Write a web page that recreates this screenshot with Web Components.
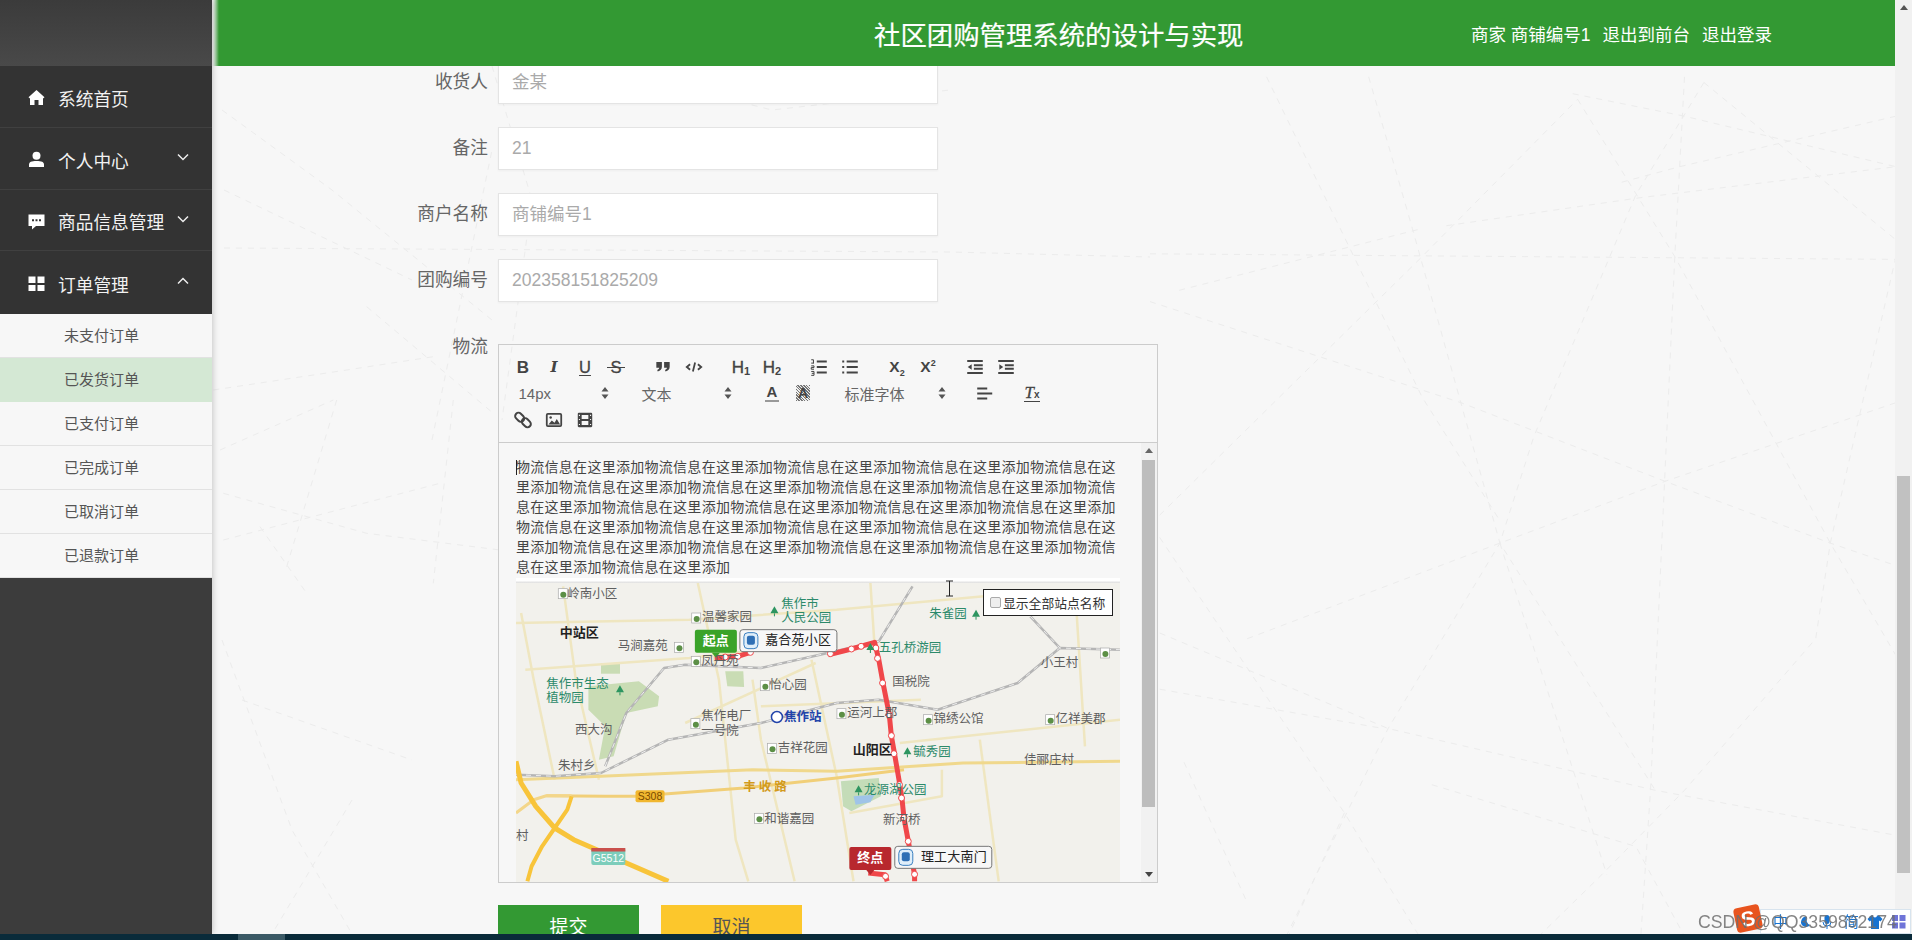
<!DOCTYPE html>
<html lang="zh">
<head>
<meta charset="utf-8">
<title>社区团购管理系统的设计与实现</title>
<style>
  html, body { margin: 0; height: 100%; overflow: hidden; }
  body { display: flex; flex-direction: column; background: #f7f7f7; color: #666;
    font-family: "Liberation Sans", "Noto Sans CJK SC", sans-serif; }
  .page-row { display: flex; height: 934px; overflow: hidden; }
</style>
</head>
<body>
<div class="page-row">
  <side-bar></side-bar>
  <main-pane>
    <order-form>
      <form-row label="收货人"><text-field value="金某"></text-field></form-row>
      <form-row label="备注"><text-field value="21"></text-field></form-row>
      <form-row label="商户名称"><text-field value="商铺编号1"></text-field></form-row>
      <form-row label="团购编号"><text-field value="202358151825209"></text-field></form-row>
      <form-row label="物流" tall><rich-editor></rich-editor></form-row>
      <form-actions></form-actions>
    </order-form>
  </main-pane>
  <page-scroll></page-scroll>
</div>
<task-strip></task-strip>
<ime-bar></ime-bar>

<script>
// small helper, every element is just a template in an open shadow root
function define(name, html) {
  const tpl = document.createElement("template");
  tpl.innerHTML = html;
  customElements.define(name, class extends HTMLElement {
    constructor() {
      super();
      this.attachShadow({ mode: "open" });
      this.shadowRoot.appendChild(tpl.content.cloneNode(true));
    }
  });
}

const chevDown = `<svg class="chev" width="14" height="10" viewBox="0 0 14 10"><path d="M2 2.5l5 5 5-5" fill="none" stroke="#eee" stroke-width="1.5"/></svg>`;
const chevUp = `<svg class="chev" width="14" height="10" viewBox="0 0 14 10"><path d="M2 7.5l5-5 5 5" fill="none" stroke="#eee" stroke-width="1.5"/></svg>`;

define("side-bar", `
  <style>
    :host { display: block; flex: 0 0 212px; width: 212px; background: #3c3c3c; position: relative; z-index: 3;
      box-shadow: 0 0 7px rgba(0,0,0,.25); }
    .logo { height: 66px; background: linear-gradient(#3b3b3b, #494949); }
    .item { box-sizing: border-box; height: 62px; background: #333; border-bottom: 1px solid #404040;
      display: flex; align-items: center; color: #f2f2f2; font-size: 17.700px; padding: 2px 0 0 28px; }
    .item.s { height: 61px; }
    .item.l { height: 63px; border-bottom: 0; }
    .item svg.ic { width: 17px; height: 17px; margin-right: 13px; fill: #fff; flex: none; }
    .item .chev { margin-left: auto; margin-right: 22px; margin-top: -5px; }
    .sub { background: #f7f7f7; }
    .sub div { box-sizing: border-box; height: 44px; line-height: 43px; padding-left: 64px; font-size: 15px; color: #555;
      border-bottom: 1px solid #e2e2e2; }
    .sub div.on { background: #d4e8d4; border-bottom-color: #d4e8d4; }
  </style>
  <div class="logo"></div>
  <div class="item"><svg class="ic" viewBox="0 0 17 17"><path d="M8.5 1L0.5 8.2 2 9.5V16h4.5v-5h4v5H15V9.500l1.500-1.300z"/></svg>系统首页</div>
  <div class="item"><svg class="ic" viewBox="0 0 17 17"><circle cx="8.500" cy="4.800" r="4"/><path d="M1 16v-2.500C1 11 3.500 10 8.500 10s7.500 1 7.500 3.500V16z"/></svg>个人中心${chevDown}</div>
  <div class="item s"><svg class="ic" viewBox="0 0 17 17"><path fill-rule="evenodd" d="M0.500 1.500h16v11.500H8L4 16.500V13H0.500zM4 6.200v2h2v-2zM7.500 6.200v2h2v-2zM11 6.200v2h2v-2z"/></svg>商品信息管理${chevDown}</div>
  <div class="item l"><svg class="ic" viewBox="0 0 17 17"><path d="M.5 1.500h7v6.500h-7zM9.500 1.500h7v6.500h-7zM.5 10h7v6h-7zM9.500 10h7v6h-7z"/></svg>订单管理${chevUp}</div>
  <div class="sub">
    <div>未支付订单</div><div class="on">已发货订单</div><div>已支付订单</div>
    <div>已完成订单</div><div>已取消订单</div><div>已退款订单</div>
  </div>
`);

define("top-bar", `
  <style>
    :host { position: absolute; z-index: 2; top: 0; left: 0; right: 0; height: 66px; box-sizing: border-box;
      display: flex; align-items: center; justify-content: space-between; padding: 0 123px 0 662px;
      background: linear-gradient(90deg, #f0f0f0 1px, #b8d8b8 3px, #339933 7px); color: #fff; }
    .title { font-size: 26.400px; -webkit-text-stroke: .2px #fff; }
    .links { font-size: 17.500px; display: flex; gap: 12px; white-space: nowrap; }
  </style>
  <div class="title">社区团购管理系统的设计与实现</div>
  <div class="links"><span>商家 商铺编号1</span><span>退出到前台</span><span>退出登录</span></div>
`);

// faint dashed web behind the content, coordinates come from the picture
define("bg-lines", `
  <style>
    :host { position: absolute; inset: 0; z-index: 0; display: block; pointer-events: none; }
    svg { display: block; }
    path { fill: none; stroke: #ececec; stroke-width: 1; stroke-dasharray: 6 6; }
  </style>
  <svg width="1683" height="934"></svg>
`);

define("main-pane", `
  <style>
    :host { display: block; flex: 1; position: relative; overflow: hidden; background: #f7f7f7; }
    .scroller { position: relative; z-index: 1; }
  </style>
  <bg-lines></bg-lines>
  <top-bar></top-bar>
  <div class="scroller"><slot></slot></div>
`);

define("order-form", `
  <style>
    :host { display: block; padding: 61px 0 0 176px; }
  </style>
  <slot></slot>
`);

define("form-row", `
  <style>
    :host { display: flex; gap: 10px; margin-bottom: 23px; }
    :host([tall]) { margin-top: 42px; margin-bottom: 0; }
    label { flex: 0 0 100px; text-align: right; font-size: 17.700px; line-height: 43px; color: #666; white-space: nowrap; }
    :host([tall]) label { margin-top: -18px; }
  </style>
  <label></label><slot></slot>
`);

define("text-field", `
  <style>
    :host { display: block; box-sizing: border-box; width: 440px; height: 43px; line-height: 41px; background: #fff;
      border: 1px solid #e4e4e4; padding-left: 13px; font-size: 17.500px; color: #aaa;
      box-shadow: 0 1px 2px rgba(0,0,0,.04); }
  </style>
  <span></span>
`);

const bi = (inner, fill) => `<svg width="20" height="20" viewBox="0 0 18 18" fill="${fill ? "#444" : "none"}" stroke="${fill ? "none" : "#444"}" stroke-width="1.800">${inner}</svg>`;
const arrows = `<svg class="ar" width="8" height="12" viewBox="0 0 8 12"><path d="M4 0l3.500 4.500h-7zM4 12L.5 7.500h7z" fill="#555"/></svg>`;

define("rich-editor", `
  <style>
    :host { display: block; box-sizing: border-box; width: 660px; height: 539px; border: 1px solid #ccc; position: relative; }
    .tools { box-sizing: border-box; height: 98px; border-bottom: 1px solid #ccc; padding: 9px 0 0 8.500px; color: #444; }
    .row { display: flex; height: 26px; align-items: center; }
    .row.r3 { height: 27px; }
    .b { width: 31px; height: 26px; display: flex; align-items: center; justify-content: center; flex: none; }
    .g { margin-right: 16px; }
    .t { font-size: 17px; font-weight: 700; line-height: 1; }
    .x { font-size: 15.500px; font-weight: 700; line-height: 1; }
    .x sub, .x sup { font-size: 9px; line-height: 0; font-weight: 700; }
    .h { font-size: 17px; font-weight: 400; -webkit-text-stroke: .35px #444; line-height: 1; }
    .h sub { font-size: 11px; line-height: 0; vertical-align: -2px; font-weight: 700; -webkit-text-stroke: 0; }
    .strike { position: relative; display: inline-block; padding: 0 1px; }
    .strike::after { content: ""; position: absolute; left: -2px; right: -2px; top: 8px; height: 1.500px; background: #444; }
    .pick { flex: none; width: 104px; display: flex; align-items: center; justify-content: space-between; padding: 0 5px 0 9px;
      box-sizing: border-box; font-size: 15px; color: #666; }
    .body { display: flex; height: 439px; overflow: hidden; }
    .content { flex: 1; box-sizing: border-box; padding: 14px 0 0 17px; overflow: hidden; position: relative; }
    .text { width: 603px; font-size: 14px; line-height: 20px; letter-spacing: .28px; color: #444; word-break: break-all; }
    .caret { position: absolute; left: 17px; top: 17px; width: 1px; height: 15px; background: #222; }
    .band { width: 604px; height: 5px; margin-top: 1px; background: linear-gradient(#fff, #fff 50%, #ddd); }
    .bar { flex: 0 0 16px; width: 16px; background: #f1f1f1; position: relative; }
    .bar i { position: absolute; left: 1px; top: 17px; width: 13px; height: 347px; background: #bdbdbd; }
    .bar svg { position: absolute; left: 3px; }
    .beam { position: absolute; left: 446px; top: 235px; }
  </style>
  <div class="tools">
    <div class="row">
      <div class="b"><span class="t">B</span></div>
      <div class="b"><span class="t" style="font-family:'DejaVu Serif',serif;font-style:italic;font-size:15px">I</span></div>
      <div class="b"><span class="t" style="font-weight:400;font-size:16.500px;text-decoration:underline;text-underline-offset:2px;-webkit-text-stroke:.3px #444">U</span></div>
      <div class="b g"><span class="t strike" style="font-weight:400;font-size:16.500px;-webkit-text-stroke:.3px #444">S</span></div>
      <div class="b">${bi(`<path d="M3 4.500h5v4.300c0 2.400-1.300 3.700-3.700 4.200l-.5-1.300c1.100-.4 1.700-1 1.800-2H3zM10 4.500h5v4.300c0 2.400-1.300 3.700-3.700 4.200l-.5-1.300c1.100-.4 1.700-1 1.800-2H10z"/>`, true)}</div>
      <div class="b g">${bi(`<path d="M5.500 6.500L2.500 9l3 2.500M12.500 6.500l3 2.500-3 2.500M10 5l-2 8" stroke-width="1.600"/>`)}</div>
      <div class="b"><span class="h">H<sub>1</sub></span></div>
      <div class="b g"><span class="h">H<sub>2</sub></span></div>
      <div class="b">${bi(`<path d="M7 4h9M7 9h9M7 14h9"/><path d="M2 2.500h2v3M2 5.500h2.500M2 8h2.500v1.500H2V11h2.500M2 13h2.500v3.500H2M2.500 14.700h2" stroke-width=".9"/>`)}</div>
      <div class="b g">${bi(`<path d="M6 4h10M6 9h10M6 14h10M2 4h1.800M2 9h1.800M2 14h1.800"/>`)}</div>
      <div class="b"><span class="x">X<sub>2</sub></span></div>
      <div class="b g"><span class="x">X<sup>2</sup></span></div>
      <div class="b">${bi(`<path d="M2 3.500h14M8 7.500h8M8 10.500h8M2 14.500h14"/><path d="M6 6.500v5L2.500 9z" fill="#444" stroke="none"/>`)}</div>
      <div class="b">${bi(`<path d="M2 3.500h14M8 7.500h8M8 10.500h8M2 14.500h14"/><path d="M3 6.500v5L6.500 9z" fill="#444" stroke="none"/>`)}</div>
    </div>
    <div class="row">
      <div class="pick" style="margin-left:2px;margin-right:19px">14px${arrows}</div>
      <div class="pick" style="margin-right:20px">文本${arrows}</div>
      <div class="b"><span class="t" style="font-size:15px;border-bottom:2px solid #999;padding:0 2px 1px">A</span></div>
      <div class="b g"><span class="t" style="font-size:14px;padding:1px 2px;background:repeating-linear-gradient(45deg,#777 0 1px,#eee 1px 2px)">A</span></div>
      <div class="pick" style="width:116px;margin-right:19px;padding-right:5px;padding-left:10px">标准字体${arrows}</div>
      <div class="b g">${bi(`<path d="M2 5h9M2 9.500h13.500M2 14h9"/>`)}</div>
      <div class="b"><span class="t" style="font-family:'Liberation Serif',serif;font-style:italic;font-weight:400;font-size:17px;border-bottom:1.500px solid #444;-webkit-text-stroke:.3px #444">T<span style="font:700 10px 'Liberation Sans',sans-serif;-webkit-text-stroke:0">x</span></span></div>
    </div>
    <div class="row r3">
      <div class="b">${bi(`<rect x="1.500" y="3.500" width="9" height="6" rx="3" transform="rotate(45 6 6.500)"/><rect x="7.500" y="8.500" width="9" height="6" rx="3" transform="rotate(45 12 11.500)"/>`)}</div>
      <div class="b">${bi(`<rect x="2.500" y="3.500" width="13" height="11" rx="1" stroke-width="1.600"/><path d="M4 13l3-3.500 2.500 2 2-3.500L14.500 13z" fill="#444" stroke="none"/><circle cx="6" cy="6.800" r="1.100" fill="#444" stroke="none"/>`)}</div>
      <div class="b">${bi(`<rect x="2.500" y="2.500" width="13" height="13" rx="1" fill="#444" stroke="none"/><path d="M6 4.500h6v3.500H6zM6 10h6v3.500H6z" fill="#f6f6f6" stroke="none"/><path d="M3.500 8.500h1M3.500 4.800h1M3.500 13h1M13.500 8.500h1M13.500 4.800h1M13.500 13h1" stroke="#f6f6f6" stroke-width="1"/>`)}</div>
    </div>
  </div>
  <div class="body">
    <div class="content">
      <div class="text"></div>
      <div class="caret"></div>
      <div class="band"></div>
      <route-map></route-map>
    </div>
    <div class="bar">
      <svg style="top:5px" width="10" height="6" viewBox="0 0 10 6"><path d="M5 0l4 5H1z" fill="#666"/></svg>
      <i></i>
      <svg style="bottom:5px" width="10" height="6" viewBox="0 0 10 6"><path d="M5 6L1 1h8z" fill="#444"/></svg>
    </div>
  </div>
  <svg class="beam" width="9" height="17" viewBox="0 0 9 17"><path d="M1 1h7M4.500 1v15M1 16h7" stroke="#222" fill="none" stroke-width="1"/></svg>
`);

define("route-map", `
  <style>
    :host { display: block; position: relative; width: 604px; height: 300px; background: #f2f1ec; overflow: hidden; }
    svg { position: absolute; left: 0; top: 0; }
    span { position: absolute; white-space: nowrap; font-size: 12.500px; line-height: 14px; color: #5f5f5f; transform: translateY(-7px); }
    span.k { color: #222; font-weight: 700; font-size: 13px; }
    span.g { color: #2c8a6a; }
    span.b { color: #2244aa; font-weight: 700; }
    span.o { color: #d29a1c; font-weight: 700; letter-spacing: 3px; }
    span.m { color: #fff; font-weight: 700; font-size: 13px; }
    span.d { color: #222; font-size: 13px; letter-spacing: .2px; }
    .tag { position: absolute; font-size: 10.500px; line-height: 1; padding: 0; text-align: center; }
    .pick { position: absolute; left: 467px; top: 6px; box-sizing: border-box; width: 130px; height: 27px; background: #fff; border: 1px solid #222;
      display: flex; align-items: center; gap: 2px; padding-left: 6px; font-size: 12.800px; color: #333; white-space: nowrap; }
    .pick i { width: 11px; height: 11px; box-sizing: border-box; border: 1px solid #aaa; background: #eee; border-radius: 2px; flex: none; }
  </style>
  <svg width="604" height="300"></svg>
  <div class="labels"></div>
  <div class="pick"><i></i>显示全部站点名称</div>
`);

define("form-actions", `
  <style>
    :host { display: flex; gap: 22px; margin: 22px 0 0 110px; }
    button { width: 141px; height: 50px; border: 0; font: inherit; font-size: 19px; line-height: 44px; padding: 0 0 4px; }
    .ok { background: #339933; color: #fff; }
    .no { background: #fcc72c; color: #555; }
  </style>
  <button class="ok">提交</button><button class="no">取消</button>
`);

define("page-scroll", `
  <style>
    :host { display: block; flex: 0 0 17px; background: #f1f1f1; position: relative; }
    i { position: absolute; left: 2px; top: 476px; width: 13px; height: 397px; background: #c1c1c1; }
    svg { position: absolute; left: 4px; top: 5px; }
  </style>
  <svg width="10" height="6" viewBox="0 0 10 6"><path d="M5 0l4 5H1z" fill="#555"/></svg>
  <i></i>
`);

define("task-strip", `
  <style>
    :host { display: flex; height: 6px; background: #0a2b3a; padding-left: 238px; }
    i { width: 47px; background: #3b5a66; }
  </style>
  <i></i>
`);

define("ime-bar", `
  <style>
    :host { position: fixed; left: 1695px; top: 905px; width: 217px; height: 29px; z-index: 9; display: block; }
    .box { position: absolute; left: 65px; top: 4px; right: 1px; bottom: 0; background: #fff; border: 1px solid #d8e4ee; box-sizing: border-box; }
    .logo { position: absolute; left: 40px; top: 1px; width: 26px; height: 25px; border-radius: 4px; background: #e8541e; transform: rotate(-12deg);
      color: #fff; font: 700 21px/25px "Liberation Sans", sans-serif; text-align: center; }
    .ic { position: absolute; top: 8px; font-size: 15px; line-height: 18px; color: #1673d2; }
    svg.ic { top: 9px; }
    .mark { position: absolute; left: 3px; top: 7px; font-size: 17.700px; line-height: 20px; color: rgba(110,110,110,.85); white-space: nowrap; }
  </style>
  <div class="box"></div>
  <div class="logo">S</div>
  <span class="ic" style="left:78px">中</span>
  <svg class="ic" style="left:103px" width="14" height="16" viewBox="0 0 14 16"><path d="M9 3a5 5 0 1 0 3 8 6 6 0 0 1-3-8z" fill="#1673d2"/></svg>
  <svg class="ic" style="left:127px" width="10" height="16" viewBox="0 0 10 16"><rect x="2.500" y="1" width="5" height="9" rx="2.500" fill="#1673d2"/><path d="M1 8a4 4 0 0 0 8 0M5 12v3" stroke="#1673d2" fill="none"/></svg>
  <span class="ic" style="left:149px">简</span>
  <svg class="ic" style="left:172px" width="16" height="16" viewBox="0 0 16 16"><path d="M4 1.500L0.500 5l2 2.500L4 6.500V15h8V6.500l1.500 1 2-2.500L12 1.500H10a2 2 0 0 1-4 0z" fill="#1673d2"/></svg>
  <svg class="ic" style="left:196px" width="15" height="15" viewBox="0 0 15 15"><path d="M1 1h6v6H1zM8.500 1h6v6h-6zM1 8.500h6v6H1zM8.500 8.500h6v6h-6z" fill="#6f74d8"/></svg>
  <span class="mark">CSDN @QQ3359892174</span>
`);

// attributes into shadow content
document.querySelectorAll("form-row").forEach(r => {
  r.shadowRoot.querySelector("label").textContent = r.getAttribute("label");
});
document.querySelectorAll("text-field").forEach(f => {
  f.shadowRoot.querySelector("span").textContent = f.getAttribute("value");
});

// bg web, zoomed coords converted back to page coords minus the pane offset
(function () {
  const root = document.querySelector("main-pane").shadowRoot.querySelector("bg-lines").shadowRoot;
  const svg = root.querySelector("svg");
  const right = [
    [[0,345],[1535,355]], [[610,295],[1010,245],[1535,190]], [[60,410],[560,300]],
    [[20,810],[560,350],[880,70]], [[240,30],[560,600],[720,820]], [[450,30],[540,300],[720,860],[1040,1300]],
    [[880,70],[1080,350],[1400,860],[1535,1060]], [[1140,40],[1000,240],[790,670],[720,860],[490,1190],[280,1560]],
    [[1100,30],[1080,350],[1030,1300],[1010,1560]], [[1140,40],[1535,320]], [[870,60],[1100,100],[1535,190]],
    [[1535,100],[1090,190],[960,220]], [[200,1030],[720,860],[1060,750],[1535,610]],
    [[0,430],[640,610],[1060,750],[1400,860],[1535,900]], [[1535,350],[1400,860],[1370,1030],[1100,1300],[930,1450],[800,1560]],
    [[20,1020],[490,1190],[1040,1300],[1535,1380]], [[20,1120],[480,1190]], [[20,850],[400,1340],[560,1568]],
    [[70,1250],[200,1500]], [[400,1340],[280,1568]], [[720,860],[940,1450]], [[580,1290],[1000,1400],[1100,1560]]
  ].map(l => l.map(p => [1150 + p[0] / 2.058 - 212, 60 + p[1] / 1.78]));
  const left = [
    [[640,270],[1040,210],[1300,170]], [[660,450],[1000,300]], [[1100,20],[1480,340]], [[1010,300],[860,800]],
    [[670,580],[1100,700],[1500,750]], [[670,720],[1320,550]], [[1360,300],[1300,850]], [[780,680],[920,880]]
  ].map(l => l.map(p => [p[0] / 3 - 212, 300 + p[1] / 3]));
  const extra = [
    [[12,248],[738,252],[938,257]], [[10,110],[120,190],[280,320]], [[12,190],[200,280]],
    [[280,66],[320,200],[290,420]], [[400,70],[560,110],[738,90]], [[10,640],[80,830],[140,934]],
    [[140,800],[60,934]], [[30,700],[200,760]], [[220,440],[280,150]]
  ];
  let d = "";
  right.concat(left, extra).forEach(l => {
    d += "M" + l.map(p => p[0].toFixed(1) + " " + p[1].toFixed(1)).join("L");
  });
  svg.innerHTML = `<path d="${d}"/>`;
})();

// editor text and the map drawn into it
(function () {
  const ed = document.querySelector("rich-editor").shadowRoot;
  ed.querySelector(".text").textContent = "物流信息在这里添加".repeat(25);
  const map = ed.querySelector("route-map").shadowRoot;
  const X = x => (x - 38) / 2.376, Y = y => (y - 10) / 3;
  const pts = l => l.map(p => X(p[0]).toFixed(1) + "," + Y(p[1]).toFixed(1)).join(" ");
  const line = (l, color, w, extra) => `<polyline points="${pts(l)}" fill="none" stroke="${color}" stroke-width="${w}" stroke-linejoin="round" ${extra || ""}/>`;
  const poly = (l, color) => `<polygon points="${pts(l)}" fill="${color}"/>`;
  let s = "";
  // parks
  s += poly([[210,320],[330,305],[378,350],[375,380],[300,400],[270,530],[235,540],[250,440],[210,390]], "#c9dcb4");
  s += poly([[240,250],[285,250],[285,282],[240,282]], "#c9dcb4");
  s += poly([[535,275],[578,275],[580,322],[540,320]], "#c9dcb4");
  s += poly([[810,605],[900,595],[905,650],[835,695],[815,680]], "#c4dcb8");
  s += poly([[840,650],[890,645],[880,668],[845,675]], "#9fc4e8");
  // pale roads
  const pale = [
    [[38,130],[450,120],[800,90],[1150,50]], [[60,270],[450,235],[750,190]], [[470,10],[520,300],[560,780],[590,905]],
    [[880,10],[890,200]], [[740,240],[800,590],[840,905]], [[150,20],[180,300],[235,600]], [[50,100],[80,300],[130,600]],
    [[1140,480],[1185,905]], [[950,490],[1473,420]], [[1050,570],[1050,650],[830,700]], [[1370,100],[1390,500]],
    [[600,300],[620,480],[700,905]], [[440,430],[750,250]], [[620,380],[1000,360]]
  ];
  pale.forEach(l => s += line(l, "#efe6c0", 2.500));
  s += line([[38,600],[240,590],[600,570],[800,575],[1100,550],[1473,545]], "#f0d88c", 3);
  s += line([[110,648],[250,650],[320,650],[580,625],[800,595],[960,570]], "#f1cf78", 3);
  s += line([[38,700],[80,660],[110,648],[170,648]], "#f3d68a", 3);
  // rail
  const rail = [
    [[250,560],[300,400],[390,265],[440,255],[620,265],[760,225],[900,185],[980,20]],
    [[38,585],[130,590],[240,580],[400,480],[620,430],[800,370],[900,360],[1040,390],[1230,310],[1330,205],[1473,210]],
    [[1260,110],[1330,205]]
  ];
  rail.forEach(l => s += line(l, "#b5b5b5", 2.500));
  rail.forEach(l => s += line(l, "#eee", 1, `stroke-dasharray="5 5"`));
  // highway
  s += line([[38,545],[50,610],[85,680],[130,745],[175,780],[230,810],[300,850],[400,905]], "#f8c43a", 5);
  s += line([[170,650],[160,690],[130,745],[100,800],[75,860],[65,905]], "#f8c43a", 4);
  // road signs
  s += `<rect x="${X(322)}" y="${Y(632)}" width="29" height="12" rx="2" fill="#f1b72f"/>`;
  s += `<rect x="${X(217)}" y="${Y(805)}" width="34" height="17" rx="2" fill="#7dcdbb"/><rect x="${X(217)}" y="${Y(805)}" width="34" height="3.500" fill="#c9504c"/>`;
  // route
  s += line([[510,235],[565,230],[595,218]], "#f0474a", 5);
  s += line([[780,225],[835,208],[890,188],[900,240],[910,310],[925,405],[930,470],[937,520],[950,615],[955,655],[960,715],[970,785],[985,885],[985,905]], "#f0474a", 5);
  s += line([[875,880],[915,885],[920,905]], "#f0474a", 5);
  const stops = [[535,232],[565,230],[595,218],[785,222],[835,208],[858,200],[893,205],[897,236],[909,310],[924,405],[930,468],[936,522],[949,615],[954,655],[960,714],[970,785],[985,884],[916,890]];
  stops.forEach(p => s += `<circle cx="${X(p[0])}" cy="${Y(p[1])}" r="3" fill="#fff" stroke="#f0474a" stroke-width="1"/>`);
  // poi dots
  const poi = [[148,42],[465,115],[424,203],[464,245],[628,318],[463,432],[810,402],[1016,420],[1306,420],[645,506],[614,716],[1436,220]];
  poi.forEach(p => s += `<rect x="${X(p[0]) - 4}" y="${Y(p[1]) - 5}" width="9" height="10" fill="#fff" stroke="#aaa" stroke-width=".7"/><circle cx="${X(p[0]) + 1}" cy="${Y(p[1]) + 1}" r="3" fill="#5c8f46"/>`);
  // trees
  [[652,95],[1131,105],[285,332],[880,205],[852,632],[968,518]].forEach(p =>
    s += `<path d="M${X(p[0])} ${Y(p[1]) - 5}l4 7h-8z" fill="#2d9560"/><rect x="${X(p[0]) - .5}" y="${Y(p[1]) + 2}" width="1" height="3" fill="#2d9560"/>`);
  // station circle
  s += `<circle cx="${X(658)}" cy="${Y(412)}" r="5.500" fill="#fff" stroke="#2244aa" stroke-width="1.500"/>`;
  // start and end markers
  const marker = (x, y, color, lx, ly) => {
    let m = `<rect x="${X(x)}" y="${Y(y)}" width="42" height="23" rx="2" fill="${color}"/><path d="M${X(x) + 17} ${Y(y) + 23}l4 5 4-5z" fill="${color}"/>`;
    m += `<rect x="${X(lx)}" y="${Y(ly)}" width="97" height="22" rx="3" fill="#f7f7f7" stroke="#777"/>`;
    m += `<rect x="${X(lx) + 4}" y="${Y(ly) + 3}" width="14" height="16" rx="4" fill="#dfeefa" stroke="#3a7fc0"/><rect x="${X(lx) + 7}" y="${Y(ly) + 6}" width="8" height="9" rx="2" fill="#2f6fb5"/>`;
    return m;
  };
  s += marker(463, 150, "#3aa329", 570, 150);
  s += marker(830, 802, "#b8282e", 938, 800);
  map.querySelector("svg").innerHTML = s;

  const labels = [
    ["岭南小区",160,42,""],["温馨家园",480,112,""],["马涧嘉苑",280,200,""],["凤丹苑",478,243,""],["怡心园",640,316,""],
    ["焦作电厂",478,410,""],["一号院",478,455,""],["运河上郡",825,400,""],["国税院",932,306,""],["锦绣公馆",1030,418,""],
    ["亿祥美郡",1320,418,""],["吉祥花园",660,505,""],["和谐嘉园",628,717,""],["西大沟",178,450,""],["朱村乡",138,558,""],
    ["小王村",1285,250,""],["佳郦庄村",1245,542,""],["新河桥",910,720,""],["村",38,770,""],
    ["中站区",142,160,"k"],["山阳区",838,510,"k"],
    ["焦作市",668,72,"g"],["人民公园",668,115,"g"],["朱雀园",1020,102,"g"],["五孔桥游园",900,205,"g"],["焦作市生态",110,312,"g"],
    ["植物园",110,354,"g"],["毓秀园",982,518,"g"],["龙源湖公园",865,630,"g"],
    ["焦作站",675,412,"b"],["丰收路",578,622,"o"],
    ["起点",482,184,"m"],["终点",849,835,"m"],
    ["嘉合苑小区",630,181,"d"],["理工大南门",1000,832,"d"]
  ];
  const box = map.querySelector(".labels");
  labels.forEach(l => {
    const el = document.createElement("span");
    el.textContent = l[0];
    if (l[3]) el.className = l[3];
    el.style.left = X(l[1]) + "px";
    el.style.top = Y(l[2]) + "px";
    box.appendChild(el);
  });
  [["S308",322,650,29,"#7a4a00"],["G5512",217,835,34,"#fff"]].forEach(t => {
    const el = document.createElement("div");
    el.className = "tag";
    el.textContent = t[0];
    el.style.cssText = `left:${X(t[1])}px;top:${Y(t[2]) - 5}px;width:${t[3]}px;color:${t[4]}`;
    box.appendChild(el);
  });
})();
</script>
</body>
</html>
